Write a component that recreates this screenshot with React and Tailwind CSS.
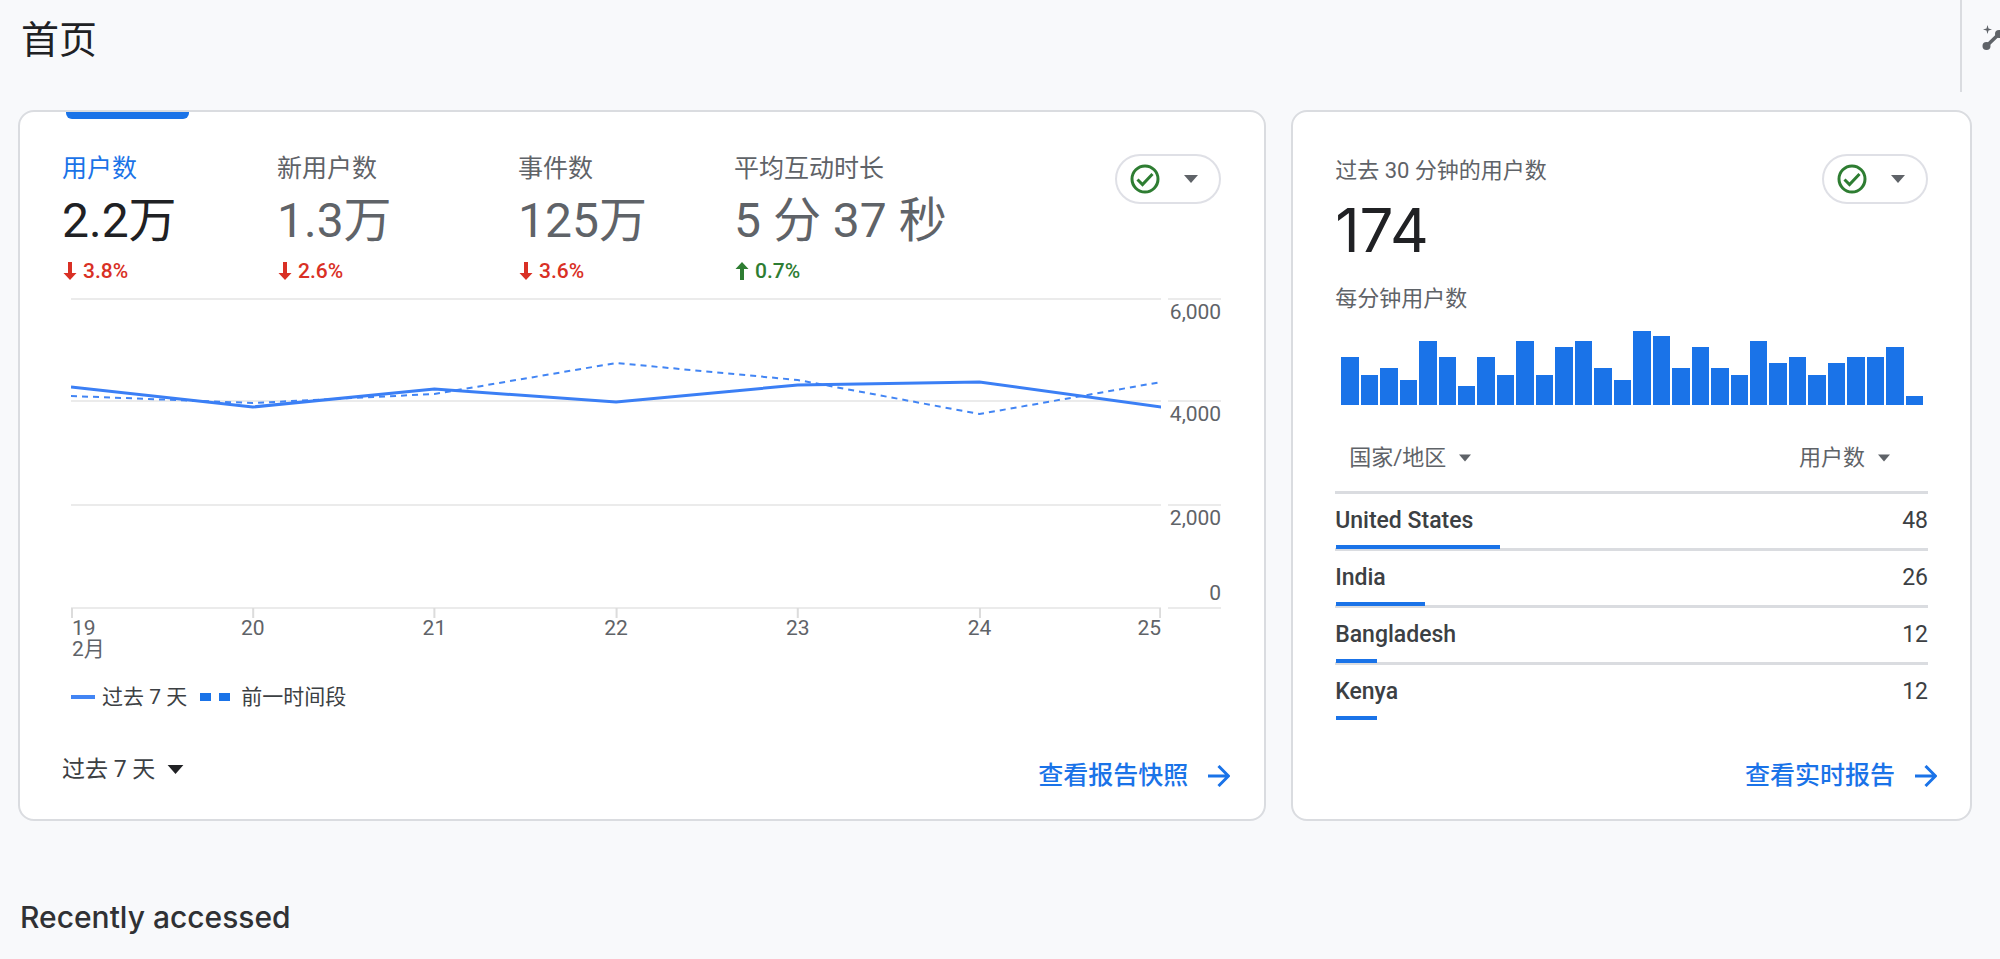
import { useState } from 'react'

const metrics = [
  { label: '用户数', value: '2.2万', change: '3.8%', up: false, width: 'w-[215px]' },
  { label: '新用户数', value: '1.3万', change: '2.6%', up: false, width: 'w-[241px]' },
  { label: '事件数', value: '125万', change: '3.6%', up: false, width: 'w-[216px]' },
  { label: '平均互动时长', value: '5 分 37 秒', change: '0.7%', up: true, width: 'w-[240px]' },
]

// y positions inside the 1089x320 plot
const current = [89, 109, 91, 104, 87, 84, 109]
const previous = [98, 105, 96, 65, 82, 116, 84]

const days = ['19', '20', '21', '22', '23', '24', '25']

const perMinute = [
  48, 30, 37, 25, 64, 48, 19, 48, 30, 64, 30, 58, 64, 37, 25,
  74, 69, 37, 58, 37, 30, 64, 42, 48, 30, 42, 48, 48, 58, 9,
]

const totalUsers = 174
const countries = [
  { name: 'United States', users: 48 },
  { name: 'India', users: 26 },
  { name: 'Bangladesh', users: 12 },
  { name: 'Kenya', users: 12 },
]

const toPoints = (values) => values.map((y, i) => `${i * 181.5},${y}`).join(' ')

const Caret = ({ className }) => (
  <svg viewBox="0 0 14 8" className={className} fill="currentColor" aria-hidden="true">
    <path d="M0 0h14L7 8z" />
  </svg>
)

const InsightsIcon = () => (
  <svg viewBox="0 0 44 44" className="h-11 w-11" fill="currentColor" aria-hidden="true">
    <path d="M5.500 32L18 20l8 8L38 15" fill="none" stroke="currentColor" strokeWidth="3.500" />
    <circle cx="5.500" cy="32" r="4" />
    <circle cx="18" cy="20" r="4" />
    <circle cx="26" cy="28" r="4" />
    <circle cx="38" cy="15" r="4" />
    <path d="M6.500 11l1 3.500 3.500 1-3.500 1-1 3.500-1-3.500-3.500-1 3.500-1z" />
  </svg>
)

const StatusButton = () => (
  <button
    aria-label="数据质量"
    className="flex h-[50px] w-[106px] shrink-0 items-center justify-between rounded-full border-2 border-[#dfe0e6] bg-white pl-[13px] pr-[21px]"
  >
    <svg viewBox="0 0 30 30" className="h-[30px] w-[30px]" fill="none" stroke="#2e7d32" strokeWidth="3" aria-hidden="true">
      <circle cx="15" cy="15" r="13" />
      <path d="M7.500 15.500l5 5L22.500 10" />
    </svg>
    <Caret className="h-2 w-[14px] text-[#5f6368]" />
  </button>
)

const ChangeArrow = ({ up }) => (
  <svg viewBox="0 0 14 18" className="h-[18px] w-[14px]" fill="currentColor" aria-hidden="true">
    {up ? <path d="M7 0l6.500 7H9v11H5V7H.500z" /> : <path d="M7 18l6.500-7H9V0H5v11H.500z" />}
  </svg>
)

const ReportLink = ({ children }) => (
  <a href="#" className="flex items-center gap-5 text-[25px] leading-8 font-medium text-[#1a73e8]">
    {children}
    <svg viewBox="0 0 22 22" className="h-[22px] w-[22px]" fill="none" stroke="currentColor" strokeWidth="3" aria-hidden="true">
      <path d="M0 11h19.500M10.500 1l10 10-10 10" />
    </svg>
  </a>
)

const Dropdown = ({ label, options, className, selectClass, caretClass }) => (
  <span className={`relative inline-flex items-center ${className}`}>
    <select aria-label={label} className={`w-full appearance-none bg-transparent leading-8 outline-none ${selectClass}`}>
      {options.map((option) => (
        <option key={option}>{option}</option>
      ))}
    </select>
    <Caret className={`pointer-events-none absolute right-0 ${caretClass}`} />
  </span>
)

const LineChart = () => (
  <div className="mt-[13px] pl-[9px]">
    <div className="flex gap-[7px]">
      <div className="min-w-0 flex-1">
        <svg viewBox="0 0 1089 320" preserveAspectRatio="none" className="block h-[320px] w-full" fill="none">
          <g stroke="#ebebeb" strokeWidth="2">
            <path d="M0 1h1089M0 103h1089M0 207h1089M0 310h1089" />
            <path d="M1 310v10M182 310v10M363 310v10M545 310v10M726 310v10M908 310v10M1088 310v10" stroke="#dcdcdc" />
          </g>
          <polyline points={toPoints(previous)} stroke="#4285f4" strokeWidth="2" strokeDasharray="6 5" />
          <polyline points={toPoints(current)} stroke="#3b7ff5" strokeWidth="3" />
        </svg>
        <div className="grid grid-cols-[1fr_2fr_2fr_2fr_2fr_2fr_1fr] text-center text-[21px] leading-[21px] text-[#5f6368]">
          {days.map((day) => (
            <div key={day} className="first:pl-px first:text-left last:text-right">
              {day}
              {day === '19' && <div>2月</div>}
            </div>
          ))}
        </div>
      </div>
      <div className="w-[53px] text-right text-[21px] leading-6 text-[#5f6368]">
        <div className="h-[102px] border-t-2 border-[#ebebeb]">6,000</div>
        <div className="h-[104px] border-t-2 border-[#ebebeb]">4,000</div>
        <div className="flex h-[105px] flex-col justify-between border-y-2 border-[#ebebeb] pb-[2px]">
          <span>2,000</span>
          <span>0</span>
        </div>
      </div>
    </div>
  </div>
)

const OverviewCard = () => {
  const [active, setActive] = useState(0)

  return (
    <section className="flex flex-col rounded-2xl border-2 border-[#dadce0] bg-white pr-[43px] pb-[19px] pl-[42px]">
      <div className="flex items-start justify-between">
        <div className="flex">
          {metrics.map((metric, i) => (
            <button
              key={metric.label}
              onClick={() => setActive(i)}
              className={`relative shrink-0 pt-[41px] text-left ${metric.width}`}
            >
              {active === i && (
                <span className="absolute top-0 left-1 h-[7px] w-[123px] rounded-b-md bg-[#1a73e8]" />
              )}
              <div className={`text-[25px] leading-8 ${active === i ? 'text-[#1a73e8]' : 'text-[#5f6368]'}`}>
                {metric.label}
              </div>
              <div className={`mt-2 text-5xl leading-14 ${active === i ? 'text-[#202124]' : 'text-[#5f6368]'}`}>
                {metric.value}
              </div>
              <div
                className={`mt-2 flex items-center gap-[6px] pl-px text-[21px] leading-7 font-medium ${
                  metric.up ? 'text-[#2e7d32]' : 'text-[#d93025]'
                }`}
              >
                <ChangeArrow up={metric.up} />
                {metric.change}
              </div>
            </button>
          ))}
        </div>
        <div className="pt-[42px]">
          <StatusButton />
        </div>
      </div>

      <LineChart />

      {/* Legend */}
      <div className="mt-[22px] flex items-center pl-[9px] text-[21px] leading-[30px] text-[#3c4043]">
        <span className="mr-[7px] h-1 w-6 bg-[#4285f4]" />
        过去 7 天
        <span className="mr-2 ml-[13px] h-2 w-[11px] bg-[#1a73e8]" />
        <span className="mr-[11px] h-2 w-[11px] bg-[#1a73e8]" />
        前一时间段
      </div>

      <div className="-mr-[9px] mt-auto flex h-12 items-center justify-between">
        <Dropdown
          label="日期范围"
          options={['过去 7 天']}
          className="self-start text-[23px] text-[#3c4043]"
          selectClass="pt-[2px] pr-7"
          caretClass="h-[9px] w-[17px] text-[#202124]"
        />
        <ReportLink>查看报告快照</ReportLink>
      </div>
    </section>
  )
}

const RealtimeCard = () => (
  <section className="flex flex-col rounded-2xl border-2 border-[#dadce0] bg-white pr-[42px] pb-[19px] pl-[42px]">
    <div className="flex items-start justify-between pt-[42px]">
      <div>
        <h2 className="text-[22px] leading-[34px] text-[#5f6368]">过去 30 分钟的用户数</h2>
        <p className="mt-[6px] font-['Inter',sans-serif] text-[60px] leading-[72px] text-[#202124]">{totalUsers}</p>
      </div>
      <StatusButton />
    </div>
    <h3 className="mt-4 text-[22px] leading-[34px] text-[#5f6368]">每分钟用户数</h3>
    <div className="mt-[14px] flex h-[75px] items-end gap-[2px] pr-[5px] pl-[6px]">
      {perMinute.map((height, i) => (
        <div key={i} className="flex-1 bg-[#1a73e8]" style={{ height }} />
      ))}
    </div>

    <table className="mt-9 mb-8 w-full">
      <thead className="text-[22px] text-[#5f6368]">
        <tr className="h-[51px] align-top">
          <th className="pl-[14px] text-left font-normal">
            <Dropdown label="维度" options={['国家/地区']} className="" selectClass="pr-6" caretClass="h-2 w-3" />
          </th>
          <th className="pr-[38px] text-right font-normal">
            <Dropdown label="指标" options={['用户数']} className="" selectClass="pr-6" caretClass="h-2 w-3" />
          </th>
        </tr>
      </thead>
      <tbody className="text-[23px] leading-8 text-[#3c4043]">
        {countries.map((country) => (
          <tr key={country.name} className="relative h-[57px] border-t-3 border-[#dadce0]">
            <td className="text-left font-medium">
              {country.name}
              <span
                className="absolute bottom-0 left-px h-1 bg-[#1a73e8]"
                style={{ width: `${(country.users / totalUsers) * 100}%` }}
              />
            </td>
            <td className="text-right">{country.users}</td>
          </tr>
        ))}
      </tbody>
    </table>

    <div className="-mr-[9px] mt-auto flex h-12 items-center justify-end">
      <ReportLink>查看实时报告</ReportLink>
    </div>
  </section>
)

const App = () => {
  return (
    <div className="min-h-screen overflow-hidden bg-[#f8f9fb] font-['Roboto','Noto_Sans_CJK_SC',sans-serif]">
      <header className="flex h-[92px] justify-between">
        <h1 className="pt-4 pl-[21px] text-[38px] leading-12 text-[#202124]">首页</h1>
        <div className="w-10 overflow-hidden border-l-2 border-[#dadce0] pt-[14px] pl-[19px]">
          <button aria-label="数据分析" className="block w-11 text-[#5f6368]">
            <InsightsIcon />
          </button>
        </div>
      </header>

      <main className="pr-7 pl-[18px]">
        <div className="mt-[18px] grid grid-cols-[11fr_6fr] gap-[25px]">
          <OverviewCard />
          <RealtimeCard />
        </div>
        <h2 className="mt-[76px] pb-4 pl-[2px] font-['Inter',sans-serif] text-[30px] leading-10 font-medium text-[#303134]">
          Recently accessed
        </h2>
      </main>
    </div>
  )
}

export default App
